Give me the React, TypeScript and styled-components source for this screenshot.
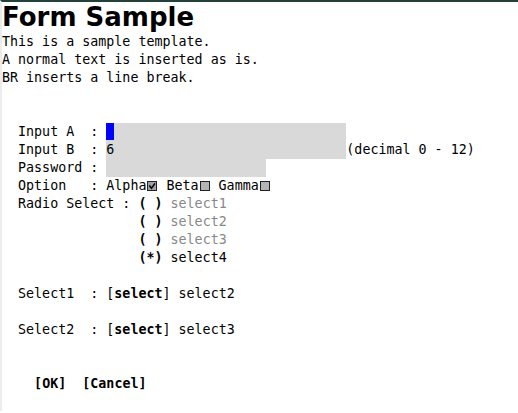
import React from 'react'
import styled, { createGlobalStyle } from 'styled-components'

const Global = createGlobalStyle`
  html, body {
    margin: 0;
    padding: 0;
    background: #fff;
  }
`

const Page = styled.div`
  border-top: 2px solid #23423a;
  border-left: 2px solid #ececec;
  min-height: 411px;
  box-sizing: border-box;
  color: #000;
`

const Title = styled.h1`
  margin: 0;
  font-family: 'DejaVu Sans', sans-serif;
  font-weight: bold;
  font-size: 26px;
  line-height: 31px;
`

const Body = styled.div`
  font-family: 'DejaVu Sans Mono', monospace;
  font-size: 13.33px;
  line-height: 18px;
`

const Line = styled.div`
  white-space: pre;
  height: 18px;
`

const Field = styled.span<{ $w: number }>`
  display: inline-block;
  vertical-align: top;
  width: ${(p) => p.$w}px;
  height: 18px;
  background: #d9d9d9;
`

const Cursor = styled.span`
  display: inline-block;
  vertical-align: top;
  width: 8px;
  height: 17px;
  background: #0000ff;
`

const Dim = styled.span`
  color: #888;
`

const Strong = styled.b`
  font-weight: bold;
`

const Box = styled.span`
  display: inline-block;
  width: 12px;
  height: 10px;
  vertical-align: -1px;
`

function Check({ on }: { on?: boolean }) {
  return (
    <Box>
      <svg width="12" height="10" viewBox="0 0 12 10">
        <rect x="1.5" y="0.5" width="9" height="9" fill={on ? '#a0a0a0' : '#b4b4b4'} stroke="#222" />
        {on && <path d="M3.3 4.6 L5.5 7.2 L9 2.4" fill="none" stroke="#000" strokeWidth="1.5" />}
      </svg>
    </Box>
  )
}

export default function App() {
  return (
    <Page>
      <Global />
      <Title>Form Sample</Title>
      <Body>
        <Line>This is a sample template.</Line>
        <Line>A normal text is inserted as is.</Line>
        <Line>BR inserts a line break.</Line>
        <Line> </Line>
        <Line> </Line>
        <Line>
          {'  Input A  : '}
          <Field $w={240}>
            <Cursor />
          </Field>
        </Line>
        <Line>
          {'  Input B  : '}
          <Field $w={240}>6</Field>
          (decimal 0 - 12)
        </Line>
        <Line>
          {'  Password : '}
          <Field $w={160} />
        </Line>
        <Line>
          {'  Option   : Alpha'}
          <Check on />
          {' Beta'}
          <Check />
          {' Gamma'}
          <Check />
        </Line>
        <Line>
          {'  Radio Select : '}
          <Strong>( )</Strong> <Dim>select1</Dim>
        </Line>
        <Line>
          {'                 '}
          <Strong>( )</Strong> <Dim>select2</Dim>
        </Line>
        <Line>
          {'                 '}
          <Strong>( )</Strong> <Dim>select3</Dim>
        </Line>
        <Line>
          {'                 '}
          <Strong>(*)</Strong> select4
        </Line>
        <Line> </Line>
        <Line>
          {'  Select1  : ['}
          <Strong>select</Strong>] select2
        </Line>
        <Line> </Line>
        <Line>
          {'  Select2  : ['}
          <Strong>select</Strong>] select3
        </Line>
        <Line> </Line>
        <Line> </Line>
        <Line>
          {'    '}
          <Strong>[OK]</Strong>
          {'  '}
          <Strong>[Cancel]</Strong>
        </Line>
      </Body>
    </Page>
  )
}
